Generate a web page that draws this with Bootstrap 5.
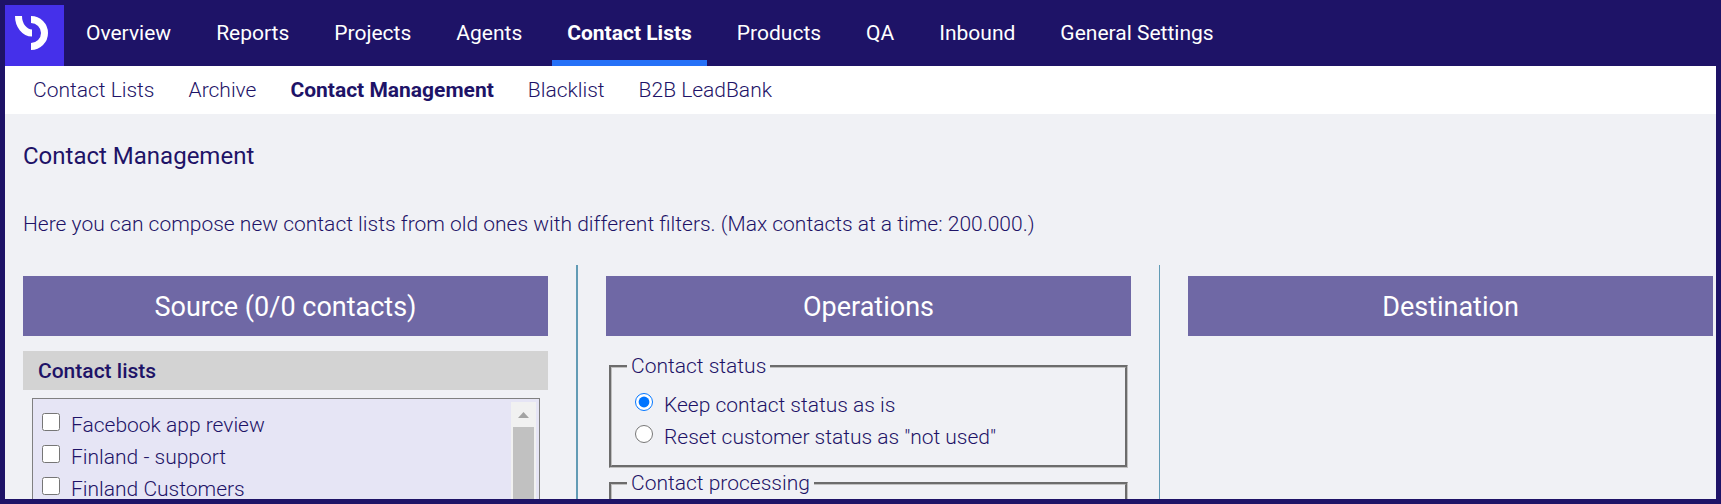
<!DOCTYPE html>
<html lang="en">
<head>
<meta charset="utf-8">
<meta name="viewport" content="width=device-width, initial-scale=1">
<title>Contact Management</title>
<link href="https://cdn.jsdelivr.net/npm/bootstrap@5.3.0/dist/css/bootstrap.min.css" rel="stylesheet">
<style>
:root { --navy: #1e1367; --page: #f0f1f5; --bar: #6f68a5; }
body { font-family: Roboto, "Liberation Sans", sans-serif; font-size: 21px; line-height: 32px; font-weight: 300; color: var(--navy); }
.app-frame { border: 5px solid var(--navy); background: var(--page); }
.main-nav { background: var(--navy); height: 61px; font-weight: 400; }
.brand-tile { width: 59px; background: #4530ea; }
.main-nav .nav { margin-left: 7px; gap: 15px; }
.main-nav .nav-link { color: #fff; padding: 12px 15px 11px; border-bottom: 6px solid transparent; font-weight: 400; height: 61px; }
.main-nav .nav-link.active { font-weight: 700; border-color: #2671f7; }
.sub-nav { height: 48px; padding: 0 28px; gap: 34px; }
.sub-nav .nav-link { color: var(--navy); padding: 0; }
.sub-nav .nav-link.active { font-weight: 700; }
.content-area { padding: 26px 3px 0 18px; }
.page-title { font-size: 24px; line-height: 32px; font-weight: 400; margin-bottom: 36px; }
.intro { margin-bottom: 25px; }
.pane { padding-top: 11px; flex: 1 1 0; min-width: 0; }
.pane-rule { width: 2px; margin: 0 28px; background: #629bb5; }
.pane-rule-thin { width: 1px; }
.pane-title { background: var(--bar); color: #fff; font-size: 27px; line-height: 58px; padding-top: 2px; font-weight: 400; margin-bottom: 15px; }
.list-title { background: #d3d3d3; font-size: 21px; line-height: 37px; font-weight: 500; padding: 2px 15px 0; margin-bottom: 8px; }
.list-box { margin: 0 8px 0 9px; border: 1px solid #808080; background: #e6e5f5; padding: 3px; height: 240px; }
.list-rows { padding: 7px 6px; }
.choice { display: flex; gap: 11px; }
.choice input { width: 18px; height: 18px; margin: 4px 0 0; flex: none; }
.scroll-track { width: 25px; background: #f1f1f1; }
.scroll-cap { height: 25px; padding-left: 7px; padding-top: 10px; }
.scroll-cap svg { display: block; }
.scroll-thumb { background: #c1c1c1; width: 21px; margin: 0 2px; }
.op-group { border: 3px groove #c0c0c0; margin: 0 3px 0; padding: 8px 23px 12px; }
.op-group legend { font-size: 21px; line-height: 30px; padding: 0 4px; margin: 0 0 0 -8px; }
</style>
</head>
<body>
<div class="app-frame vh-100 overflow-hidden d-flex flex-column">
  <header class="main-nav d-flex flex-shrink-0">
    <a href="#" class="brand-tile d-block" aria-label="Home">
      <svg width="59" height="61" viewBox="0 0 59 61" fill="none" stroke="#fff" stroke-width="7" aria-hidden="true">
        <path d="M13.500 11A13.500 17 0 0 0 27 28"/>
        <path d="M26 14.500A13.500 13.500 0 0 1 26 41.500"/>
      </svg>
    </a>
    <nav class="nav flex-nowrap" aria-label="Main">
      <a class="nav-link" href="#">Overview</a>
      <a class="nav-link" href="#">Reports</a>
      <a class="nav-link" href="#">Projects</a>
      <a class="nav-link" href="#">Agents</a>
      <a class="nav-link active text-nowrap" aria-current="page" href="#">Contact Lists</a>
      <a class="nav-link" href="#">Products</a>
      <a class="nav-link" href="#">QA</a>
      <a class="nav-link" href="#">Inbound</a>
      <a class="nav-link text-nowrap" href="#">General Settings</a>
    </nav>
  </header>
  <nav class="nav sub-nav bg-white flex-shrink-0 align-items-center" aria-label="Contact lists">
    <a class="nav-link" href="#">Contact Lists</a>
    <a class="nav-link" href="#">Archive</a>
    <a class="nav-link active" aria-current="page" href="#">Contact Management</a>
    <a class="nav-link" href="#">Blacklist</a>
    <a class="nav-link" href="#">B2B LeadBank</a>
  </nav>
  <main class="content-area">
    <h1 class="page-title">Contact Management</h1>
    <p class="intro">Here you can compose new contact lists from old ones with different filters. (Max contacts at a time: 200.000.)</p>
    <div class="d-flex">
      <section class="pane">
        <h2 class="pane-title text-center">Source (0/0 contacts)</h2>
        <h3 class="list-title">Contact lists</h3>
        <div class="list-box d-flex">
          <div class="list-rows flex-grow-1">
            <label class="choice"><input type="checkbox">Facebook app review</label>
            <label class="choice"><input type="checkbox">Finland - support</label>
            <label class="choice"><input type="checkbox">Finland Customers</label>
          </div>
          <div class="scroll-track d-flex flex-column" aria-hidden="true">
            <div class="scroll-cap"><svg width="11" height="6"><path d="M0 6L5.500 0L11 6Z" fill="#a3a3a3"/></svg></div>
            <div class="scroll-thumb flex-grow-1"></div>
          </div>
        </div>
      </section>
      <div class="pane-rule"></div>
      <section class="pane">
        <h2 class="pane-title text-center">Operations</h2>
        <fieldset class="op-group">
          <legend class="float-none w-auto">Contact status</legend>
          <label class="choice"><input type="radio" name="status" checked>Keep contact status as is</label>
          <label class="choice"><input type="radio" name="status">Reset customer status as "not used"</label>
        </fieldset>
        <fieldset class="op-group">
          <legend class="float-none w-auto">Contact processing</legend>
        </fieldset>
      </section>
      <div class="pane-rule pane-rule-thin"></div>
      <section class="pane">
        <h2 class="pane-title text-center">Destination</h2>
      </section>
    </div>
  </main>
</div>
<script src="https://cdn.jsdelivr.net/npm/bootstrap@5.3.0/dist/js/bootstrap.bundle.min.js"></script>
</body>
</html>
